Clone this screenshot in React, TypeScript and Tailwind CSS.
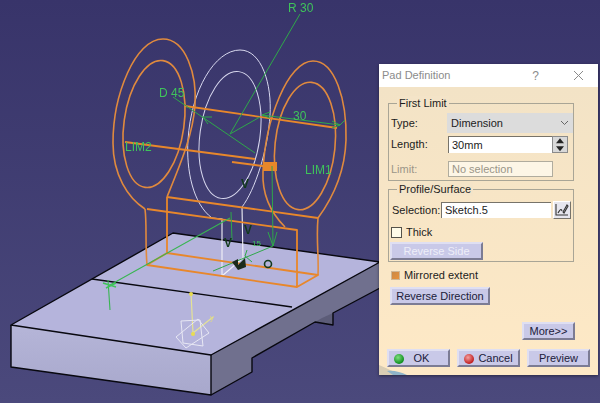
import React from "react";

function Btn({ children, className = "", disabled = false }: { children: React.ReactNode; className?: string; disabled?: boolean }) {
  return (
    <div
      className={`flex items-center justify-center h-[18px] bg-[#c9c9e8] border-2 border-t-[#dfdff2] border-l-[#dfdff2] border-r-[#7c7c94] border-b-[#7c7c94] text-[11px] leading-none ${
        disabled ? "text-[#eeeef8]" : "text-[#20203a]"
      } ${className}`}
    >
      {children}
    </div>
  );
}

function Group({ title, className = "", children }: { title: string; className?: string; children: React.ReactNode }) {
  return (
    <div className={`relative ml-[9px] w-[186px] border border-[#a9a596] ${className}`}>
      <span className="absolute left-[8px] top-[-8px] bg-[#f4e4c8] px-[2px] text-[11px] leading-[14px] text-[#1c1c1c]">{title}</span>
      {children}
    </div>
  );
}

function Led({ color }: { color: string }) {
  return <span className={`absolute left-[5px] top-[3px] h-[10px] w-[10px] rounded-full ${color}`} />;
}

function Scene() {
  const orange = "#e8872b";
  const earOrange = "#e08a3e";
  const green = "#2fa84a";
  return (
    <svg className="absolute left-0 top-0 blur-[0.3px]" width="600" height="403" viewBox="0 0 600 403" fill="none">
      <defs>
        <linearGradient id="front" x1="0" y1="0" x2="0" y2="1">
          <stop offset="0" stopColor="#b5b5d8" />
          <stop offset="1" stopColor="#a8a8cc" />
        </linearGradient>
      </defs>
      {/* plate */}
      <path d="M11 325 L173 233 L380 262 L211 355 Z" fill="#b5b4dc" />
      <path d="M11 325 L211 355 L211 395 L11 367 Z" fill="url(#front)" />
      <path d="M211 355 L380 262 L380 288 L333 313 L333 325 L315 322 L252 358 L252 372 L211 395 Z" fill="#70708e" />
      <path d="M333 313 L333 325 L315 322 L322 318 Z" fill="#5c5c78" />
      <g stroke="#08080f" strokeWidth="1.4" strokeLinejoin="round">
        <path d="M380 262 L173 233 L11 325 L211 355 L380 262" />
        <path d="M11 325 L11 367 L211 395 L211 355" />
        <path d="M211 395 L252 372 L252 358 L315 322 L333 325 L333 313 L380 288" />
        <path d="M92 279 L292 307" />
      </g>

      {/* white sketch */}
      <g stroke="#d8d8ee" strokeWidth="1">
        <path d="M212 218 C193 204 186 170 188 140 C191 90 215 50 240 50 C262 50 272 85 270 115 C268 150 255 190 242 207" />
        <ellipse cx="230" cy="135" rx="30" ry="64" transform="rotate(8 230 135)" />
      </g>
      <path d="M212 218 L222 219 L222 276 L243 258 L242 207" stroke="#f2f2f8" strokeWidth="1.1" />

      {/* orange ears */}
      <g stroke={earOrange} strokeWidth="1.6">
        <path d="M145 209 C128 198 113 175 113 143 C113 95 135 39 163 39 C186 39 197 75 195 105 C193 135 180 165 167 197" />
        <ellipse cx="154" cy="124" rx="30" ry="64" transform="rotate(8 154 124)" />
        <path d="M285 227 C270 212 262 195 263 172 C265 120 288 61 313 61 C335 61 347 100 346 140 C345 170 335 195 318 218" />
        <ellipse cx="305" cy="146" rx="30" ry="64" transform="rotate(6 305 146)" />
        <path d="M145 209 C147 225 145 240 147 265" />
        <path d="M318 218 C316 240 319 255 318 275" />
      </g>
      <g stroke={orange} strokeWidth="1.8" strokeLinejoin="round">
        <path d="M185 106 L337 128" />
        <path d="M125 142 L255 159" />
        <path d="M232 162 L277 168" strokeWidth="2" />
        <path d="M167 197 L318 218" />
        <path d="M167 197 L167 253" />
        <path d="M147 209 L297 230 L297 287 L147 265 L167 253 L318 275 L297 287" />
      </g>
      <rect x="263" y="162" width="14" height="9" fill={orange} />

      {/* green constraints */}
      <g stroke={green} strokeWidth="1">
        <path d="M300 14 L230 134 L260 117" />
        <path d="M173 97 L255 153" />
        <path d="M203 117 L212 117 M203 117 L208 124" />
        <path d="M262 115 L340 125 M262 115 L270 112 M262 115 L270 118 M340 125 L332 121 M340 125 L332 128 M345 120 L340 125" />
        <path d="M272 166 L273 246 M268 232 L273 246 L277 232" />
        <path d="M231 212 L232 240" />
        <path d="M230 218 L110 285 M108 280 L110 310" strokeWidth="1.1" stroke="#39b552" />
        <path d="M213 271 L273 246 M245 256 L252 262 M245 256 L247 250" />
      </g>
      <g fill="#3fc35b" fontFamily="Liberation Sans, sans-serif" fontSize="12">
        <text x="288" y="12">R 30</text>
        <text x="159" y="97">D 45</text>
        <text x="293" y="120">30</text>
        <text x="125" y="151">LIM2</text>
        <text x="305" y="174">LIM1</text>
        <text x="252" y="246" fontSize="8">15</text>
      </g>
      <g fill="#123a1c" fontFamily="Liberation Sans, sans-serif" fontSize="12" fontWeight="700">
        <text x="241" y="188">V</text>
        <text x="224" y="247">V</text>
        <text x="244" y="234">V</text>
      </g>
      <circle cx="268" cy="264" r="3.5" stroke="#123a1c" strokeWidth="1.6" />
      <path d="M232 262 L238 259 L238 265 L245 258 L246 267 L238 270 Z" fill="#1c2a1c" />
      <path d="M103 283 L116 287 M106 288 L116 283" stroke="#3fc35b" strokeWidth="1.5" />

      {/* axis */}
      <g stroke="#e4e296" strokeWidth="1.2">
        <path d="M191 293 L193 333 L213 317" />
      </g>
      <circle cx="191" cy="294" r="2" fill="#e8dc50" />
      <circle cx="193" cy="334" r="2" fill="#e8dc50" />
      <text x="210" y="320" fill="#e0dc80" fontFamily="Liberation Sans, sans-serif" fontSize="8">
        y
      </text>
      <g stroke="#e8e8f4" strokeWidth="1">
        <path d="M181 321 L200 320 L203 346 L183 343 Z" />
        <path d="M176 337 L198 319 L209 333 L186 348 Z" />
      </g>
    </svg>
  );
}

export default function App() {
  return (
    <div
      className="relative h-[403px] w-[600px] overflow-hidden bg-gradient-to-b from-[#38346a] to-[#4b497c]"
      style={{ fontFamily: '"Liberation Sans", Arial, sans-serif' }}
    >
      <Scene />

      {/* Dialog window */}
      <div className="absolute left-[379px] top-[64px] flex h-[311px] w-[219px] flex-col shadow-[0_1px_3px_rgba(0,0,0,0.45)]">
        <div className="flex h-[23px] items-center bg-white pl-[3px] text-[11px] text-[#8b8b8b]">
          <span className="flex-1">Pad Definition</span>
          <span className="mr-[34px] text-[12px]">?</span>
          <svg className="mr-[14px]" width="11" height="11" viewBox="0 0 11 11" stroke="#8b8b8b" strokeWidth="1">
            <path d="M1 1 L10 10 M10 1 L1 10" />
          </svg>
        </div>

        <div className="relative flex flex-1 flex-col bg-gradient-to-b from-[#f3e3c6] to-[#fee9c6] pt-[16px] text-[11px] text-[#1c1c1c]">
          <Group title="First Limit" className="h-[78px]">
            <div className="mt-[9px] flex h-[20px] items-center pl-[2px]">
              <span className="w-[56px]">Type:</span>
              <div className="flex h-[20px] w-[126px] items-center justify-between bg-[#dcdcdc] pl-[4px] pr-[4px] text-[#222]">
                <span>Dimension</span>
                <svg width="9" height="6" viewBox="0 0 9 6" fill="none" stroke="#666" strokeWidth="1">
                  <path d="M1 1 L4.5 4.5 L8 1" />
                </svg>
              </div>
            </div>
            <div className="mt-[3px] flex h-[17px] items-center pl-[2px]">
              <span className="w-[57px]">Length:</span>
              <div className="flex h-[17px] w-[104px] items-center border-l border-t border-[#77736a] bg-white pl-[3px]">30mm</div>
              <div className="flex h-[17px] w-[16px] flex-col border border-[#8a8a8a] bg-[#d8d8d8]">
                <svg className="flex-1" viewBox="0 0 14 7" width="14" height="7">
                  <path d="M7 1 L11 6 L3 6 Z" fill="#222" />
                </svg>
                <svg className="flex-1" viewBox="0 0 14 7" width="14" height="7">
                  <path d="M3 1 L11 1 L7 6 Z" fill="#222" />
                </svg>
              </div>
            </div>
            <div className="mt-[8px] flex h-[16px] items-center pl-[2px] text-[#9a9588]">
              <span className="w-[57px]">Limit:</span>
              <div className="flex h-[16px] w-[105px] items-center border border-[#b0ac9e] bg-[#fdf6e6] pl-[3px]">No selection</div>
            </div>
          </Group>

          <Group title="Profile/Surface" className="mt-[8px] h-[73px]">
            <div className="mt-[11px] flex h-[18px] items-center pl-[3px]">
              <span className="w-[49px]">Selection:</span>
              <div className="flex h-[16px] w-[110px] items-center border-l border-t border-[#77736a] bg-white pl-[3px]">Sketch.5</div>
              <div className="ml-[2px] flex h-[18px] w-[18px] items-center justify-center border border-b-[#77736a] border-r-[#77736a] border-l-white border-t-white bg-[#e6e6ee]">
                <svg width="14" height="14" viewBox="0 0 14 14" fill="none" stroke="#333" strokeWidth="1.1">
                  <path d="M1 1 L1 12 L13 12 M3 10 C5 7 6 5 7 8 M8 9 L12 2 L13 3 L9 10 Z" />
                </svg>
              </div>
            </div>
            <div className="mt-[8px] flex h-[11px] items-center pl-[2px]">
              <span className="mr-[4px] h-[11px] w-[11px] border border-[#55524a] bg-[#fffbe8]" />
              <span>Thick</span>
            </div>
            <Btn disabled className="ml-[1px] mt-[4px] w-[93px]">Reverse Side</Btn>
          </Group>

          <div className="ml-[12px] mt-[8px] flex h-[10px] items-center">
            <span className="mr-[4px] h-[9px] w-[9px] border border-[#cfb796] bg-gradient-to-br from-[#c98a48] to-[#e8913a]" />
            <span>Mirrored extent</span>
          </div>
          <Btn className="ml-[11px] mt-[7px] w-[100px]">Reverse Direction</Btn>
          <Btn className="ml-[143px] mt-[17px] w-[53px]">More&gt;&gt;</Btn>

          <div className="ml-[8px] mt-[9px] flex gap-[7px]">
            <Btn className="relative w-[63px] pl-[6px]">
              <Led color="bg-[radial-gradient(circle_at_40%_35%,#7fe07f,#0f8f1f_70%)]" />
              OK
            </Btn>
            <Btn className="relative w-[63px] pl-[14px]">
              <Led color="bg-[radial-gradient(circle_at_40%_35%,#f5a0a0,#c01f1f_70%)]" />
              Cancel
            </Btn>
            <Btn className="w-[63px]">Preview</Btn>
          </div>

          <svg className="absolute bottom-0 left-0" width="40" height="10" viewBox="0 0 40 10" fill="none">
            <path d="M0 0 C8 3 14 7 24 10 L0 10 Z" fill="#d9cdb4" />
            <path d="M8 6 C14 5 22 7 28 10 L14 10 Z" fill="#8fb4c8" />
          </svg>
        </div>
      </div>
    </div>
  );
}
